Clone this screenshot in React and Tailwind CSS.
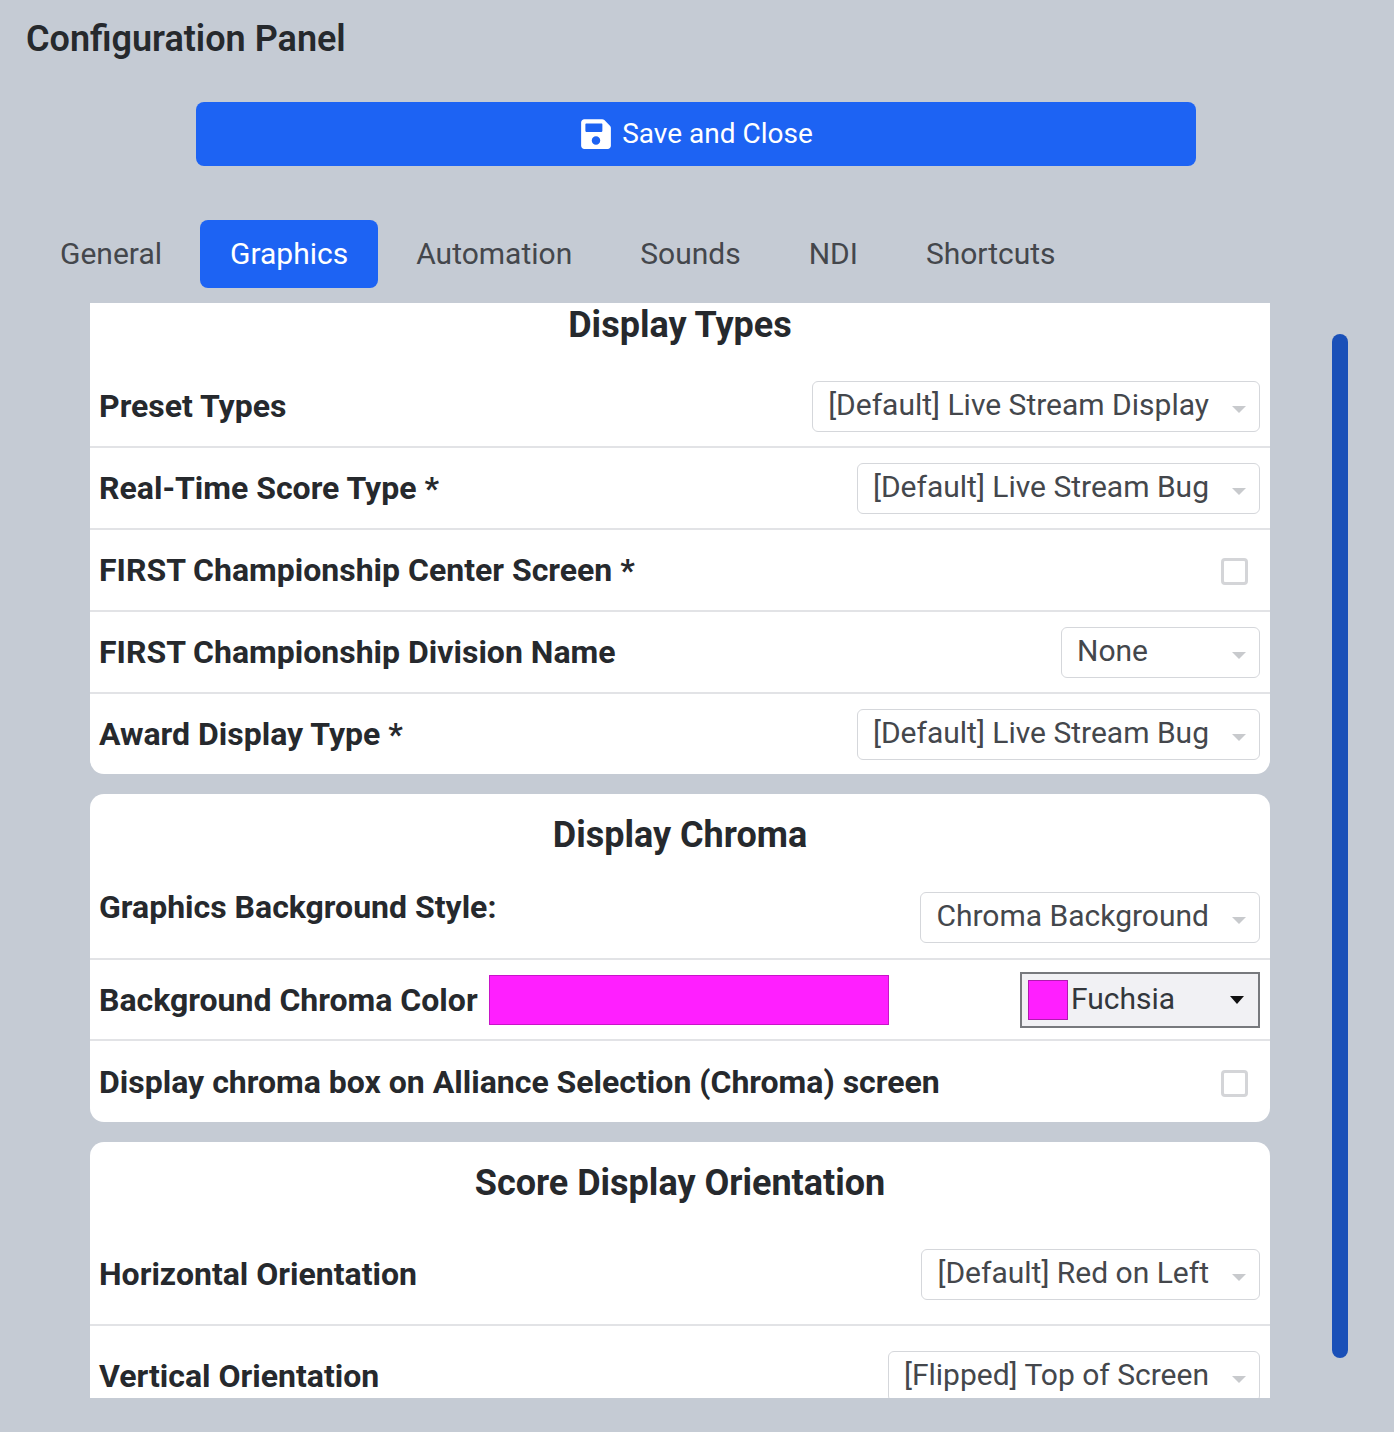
import React from "react";
import { FaSave } from "react-icons/fa";

const font = { fontFamily: "Roboto, sans-serif" };

function Select({ text }) {
  return (
    <div className="flex h-[51px] shrink-0 items-center rounded-[6px] border border-[#d5d7db] bg-white pl-[15px] pr-[13px] text-[30px] leading-none text-[#44474c]">
      <span className="-mt-[3px] whitespace-nowrap">{text}</span>
      <svg className="ml-[23px] mt-[6px]" width="14" height="7" viewBox="0 0 14 7"><path d="M0 0h14L7 7z" fill="#c8cacd" /></svg>
    </div>
  );
}

function Check() {
  return <div className="mr-[12px] mt-[3px] h-[27px] w-[27px] rounded-[4px] border-[3px] border-[#d4d5d8] bg-white" />;
}

function Row({ label, children, h = "h-[82px]", last, labelClass = "" }) {
  return (
    <div className={`flex ${h} items-center justify-between pl-[9px] pr-[10px] ${last ? "" : "border-b-2 border-[#e2e3e6]"}`}>
      <span className={`whitespace-nowrap text-[32px] font-bold leading-none text-[#26292d] ${labelClass}`}>{label}</span>
      {children}
    </div>
  );
}

function Title({ children, className }) {
  return <div className={`text-center text-[36px] font-bold leading-none text-[#26292d] ${className}`}>{children}</div>;
}

export default function App() {
  return (
    <div style={font} className="relative h-[1432px] w-[1394px] overflow-hidden bg-[#c5cbd4]">
      <h1 className="pl-[26px] pt-[19px] text-[36px] font-semibold leading-[40px] text-[#26292d]">Configuration Panel</h1>

      <div className="ml-[196px] mt-[43px] flex h-[64px] w-[1000px] items-center justify-center gap-[9px] rounded-[8px] bg-[#1d63f3] text-[28px] text-white">
        <FaSave className="h-[34px] w-[34px]" />
        <span>Save and Close</span>
      </div>

      <nav className="ml-[30px] mt-[54px] flex h-[68px] gap-[8px] text-[30px] leading-none text-[#44474c]">
        {["General", "Graphics", "Automation", "Sounds", "NDI", "Shortcuts"].map((t) => (
          <div key={t} className={`flex items-center rounded-[8px] px-[30px] ${t === "Graphics" ? "bg-[#1d63f3] text-white" : ""}`}>{t}</div>
        ))}
      </nav>

      <div className="ml-[90px] mt-[15px] h-[1095px] w-[1180px] overflow-hidden">
        <section className="rounded-b-[14px] bg-white">
          <Title className="flex h-[63px] items-start justify-center pt-[4px]">Display Types</Title>
          <Row label="Preset Types"><Select text="[Default] Live Stream Display" /></Row>
          <Row label="Real-Time Score Type *"><Select text="[Default] Live Stream Bug" /></Row>
          <Row label="FIRST Championship Center Screen *"><Check /></Row>
          <Row label="FIRST Championship Division Name">
            <div className="flex h-[51px] w-[199px] items-center justify-between rounded-[6px] border border-[#d5d7db] pl-[15px] pr-[13px] text-[30px] leading-none text-[#44474c]">
              <span className="-mt-[3px]">None</span>
              <svg className="mt-[6px]" width="14" height="7" viewBox="0 0 14 7"><path d="M0 0h14L7 7z" fill="#c8cacd" /></svg>
            </div>
          </Row>
          <Row label="Award Display Type *" h="h-[80px]" last><Select text="[Default] Live Stream Bug" /></Row>
        </section>

        <section className="mt-[20px] rounded-[14px] bg-white">
          <Title className="flex h-[82px] items-center justify-center">Display Chroma</Title>
          <Row label="Graphics Background Style:" h="h-[84px]" labelClass="-mt-5"><Select text="Chroma Background" /></Row>
          <Row label="Background Chroma Color" h="h-[81px]">
            <div className="ml-[11px] h-[50px] w-[400px] border border-[#c814c8] bg-[#ff1fff]" />
            <div className="ml-auto flex h-[56px] w-[240px] items-center border-2 border-[#77797d] bg-[#f1f1f4] pl-[6px] pr-[14px] text-[30px] leading-none text-[#33373c]">
              <div className="h-[40px] w-[40px] shrink-0 border border-[#b019b0] bg-[#ff1fff]" />
              <span className="ml-[3px] -mt-[2px]">Fuchsia</span>
              <svg className="ml-auto" width="14" height="8" viewBox="0 0 14 8"><path d="M0 0h14L7 8z" fill="#111" /></svg>
            </div>
          </Row>
          <Row label="Display chroma box on Alliance Selection (Chroma) screen" h="h-[81px]" last><Check /></Row>
        </section>

        <section className="mt-[20px] rounded-[14px] bg-white">
          <Title className="flex h-[82px] items-center justify-center">Score Display Orientation</Title>
          <Row label="Horizontal Orientation" h="h-[102px]"><Select text="[Default] Red on Left" /></Row>
          <Row label="Vertical Orientation" h="h-[100px]" last><Select text="[Flipped] Top of Screen" /></Row>
        </section>
      </div>

      <div className="absolute left-[1332px] top-[334px] h-[1024px] w-[16px] rounded-full bg-[#1a50b8]" />
    </div>
  );
}
